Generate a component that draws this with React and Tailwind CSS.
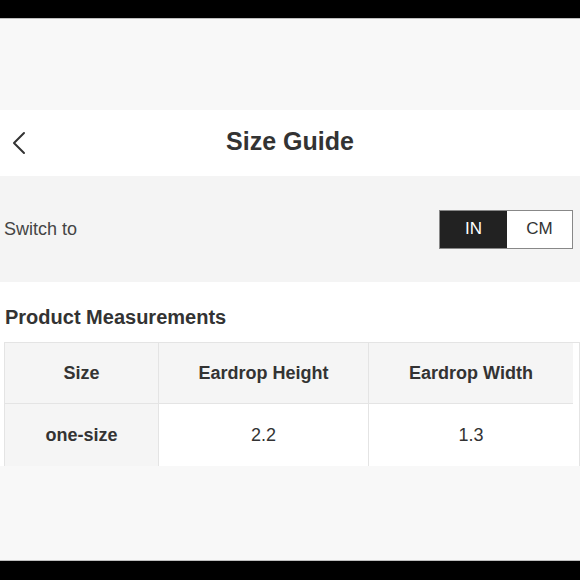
import React from "react";

export default function App() {
  const font = { fontFamily: '"Liberation Sans", Arial, sans-serif' };
  return (
    <div className="w-[580px] h-[580px] flex flex-col bg-white text-[#333] overflow-hidden" style={font}>
      <div className="h-[18px] bg-black shrink-0" />
      <div className="h-px bg-[#bdbdbd] shrink-0" />
      <div className="h-[91px] bg-[#f8f8f8] shrink-0" />
      <div className="h-[66px] bg-white shrink-0 relative flex items-center justify-center">
        <svg className="absolute left-[10px] top-[21px]" width="18" height="24" viewBox="0 0 18 24" fill="none">
          <path d="M14 2 L4 12 L14 22" stroke="#333" strokeWidth="2" strokeLinecap="round" strokeLinejoin="round" />
        </svg>
        <span className="text-[25px] font-bold text-[#333] mt-[-2px]">Size Guide</span>
      </div>
      <div className="h-[106px] bg-[#f4f4f4] shrink-0 flex items-center justify-between pl-[4px] pr-[7px]">
        <span className="text-[18px] text-[#444]">Switch to</span>
        <div className="flex h-[39px] border border-[#888]">
          <div className="w-[67px] bg-[#222] text-white text-[17px] flex items-center justify-center">IN</div>
          <div className="w-[65px] bg-white text-[#333] text-[17px] flex items-center justify-center">CM</div>
        </div>
      </div>
      <div className="h-[184px] bg-white shrink-0 flex flex-col">
        <div className="h-[60px] flex items-center pl-[5px] pt-[10px]">
          <span className="text-[20px] font-bold text-[#333]">Product Measurements</span>
        </div>
        <div className="ml-[4px] grid grid-cols-[154px_210px_204px] border-t border-l border-r border-[#e4e4e4]">
          <div className="h-[61px] bg-[#f5f5f5] border-r border-b border-[#e4e4e4] flex items-center justify-center text-[18px] font-bold">Size</div>
          <div className="h-[61px] bg-[#f5f5f5] border-r border-b border-[#e4e4e4] flex items-center justify-center text-[18px] font-bold">Eardrop Height</div>
          <div className="h-[61px] bg-[#f5f5f5] border-b border-[#e4e4e4] flex items-center justify-center text-[18px] font-bold">Eardrop Width</div>
          <div className="h-[62px] bg-[#f5f5f5] border-r border-[#e4e4e4] flex items-center justify-center text-[18px] font-bold">one-size</div>
          <div className="h-[62px] bg-white border-r border-[#e4e4e4] flex items-center justify-center text-[18px]">2.2</div>
          <div className="h-[62px] bg-white flex items-center justify-center text-[18px]">1.3</div>
        </div>
      </div>
      <div className="flex-1 bg-[#f8f8f8]" />
      <div className="h-px bg-[#bdbdbd] shrink-0" />
      <div className="h-[19px] bg-black shrink-0" />
    </div>
  );
}
